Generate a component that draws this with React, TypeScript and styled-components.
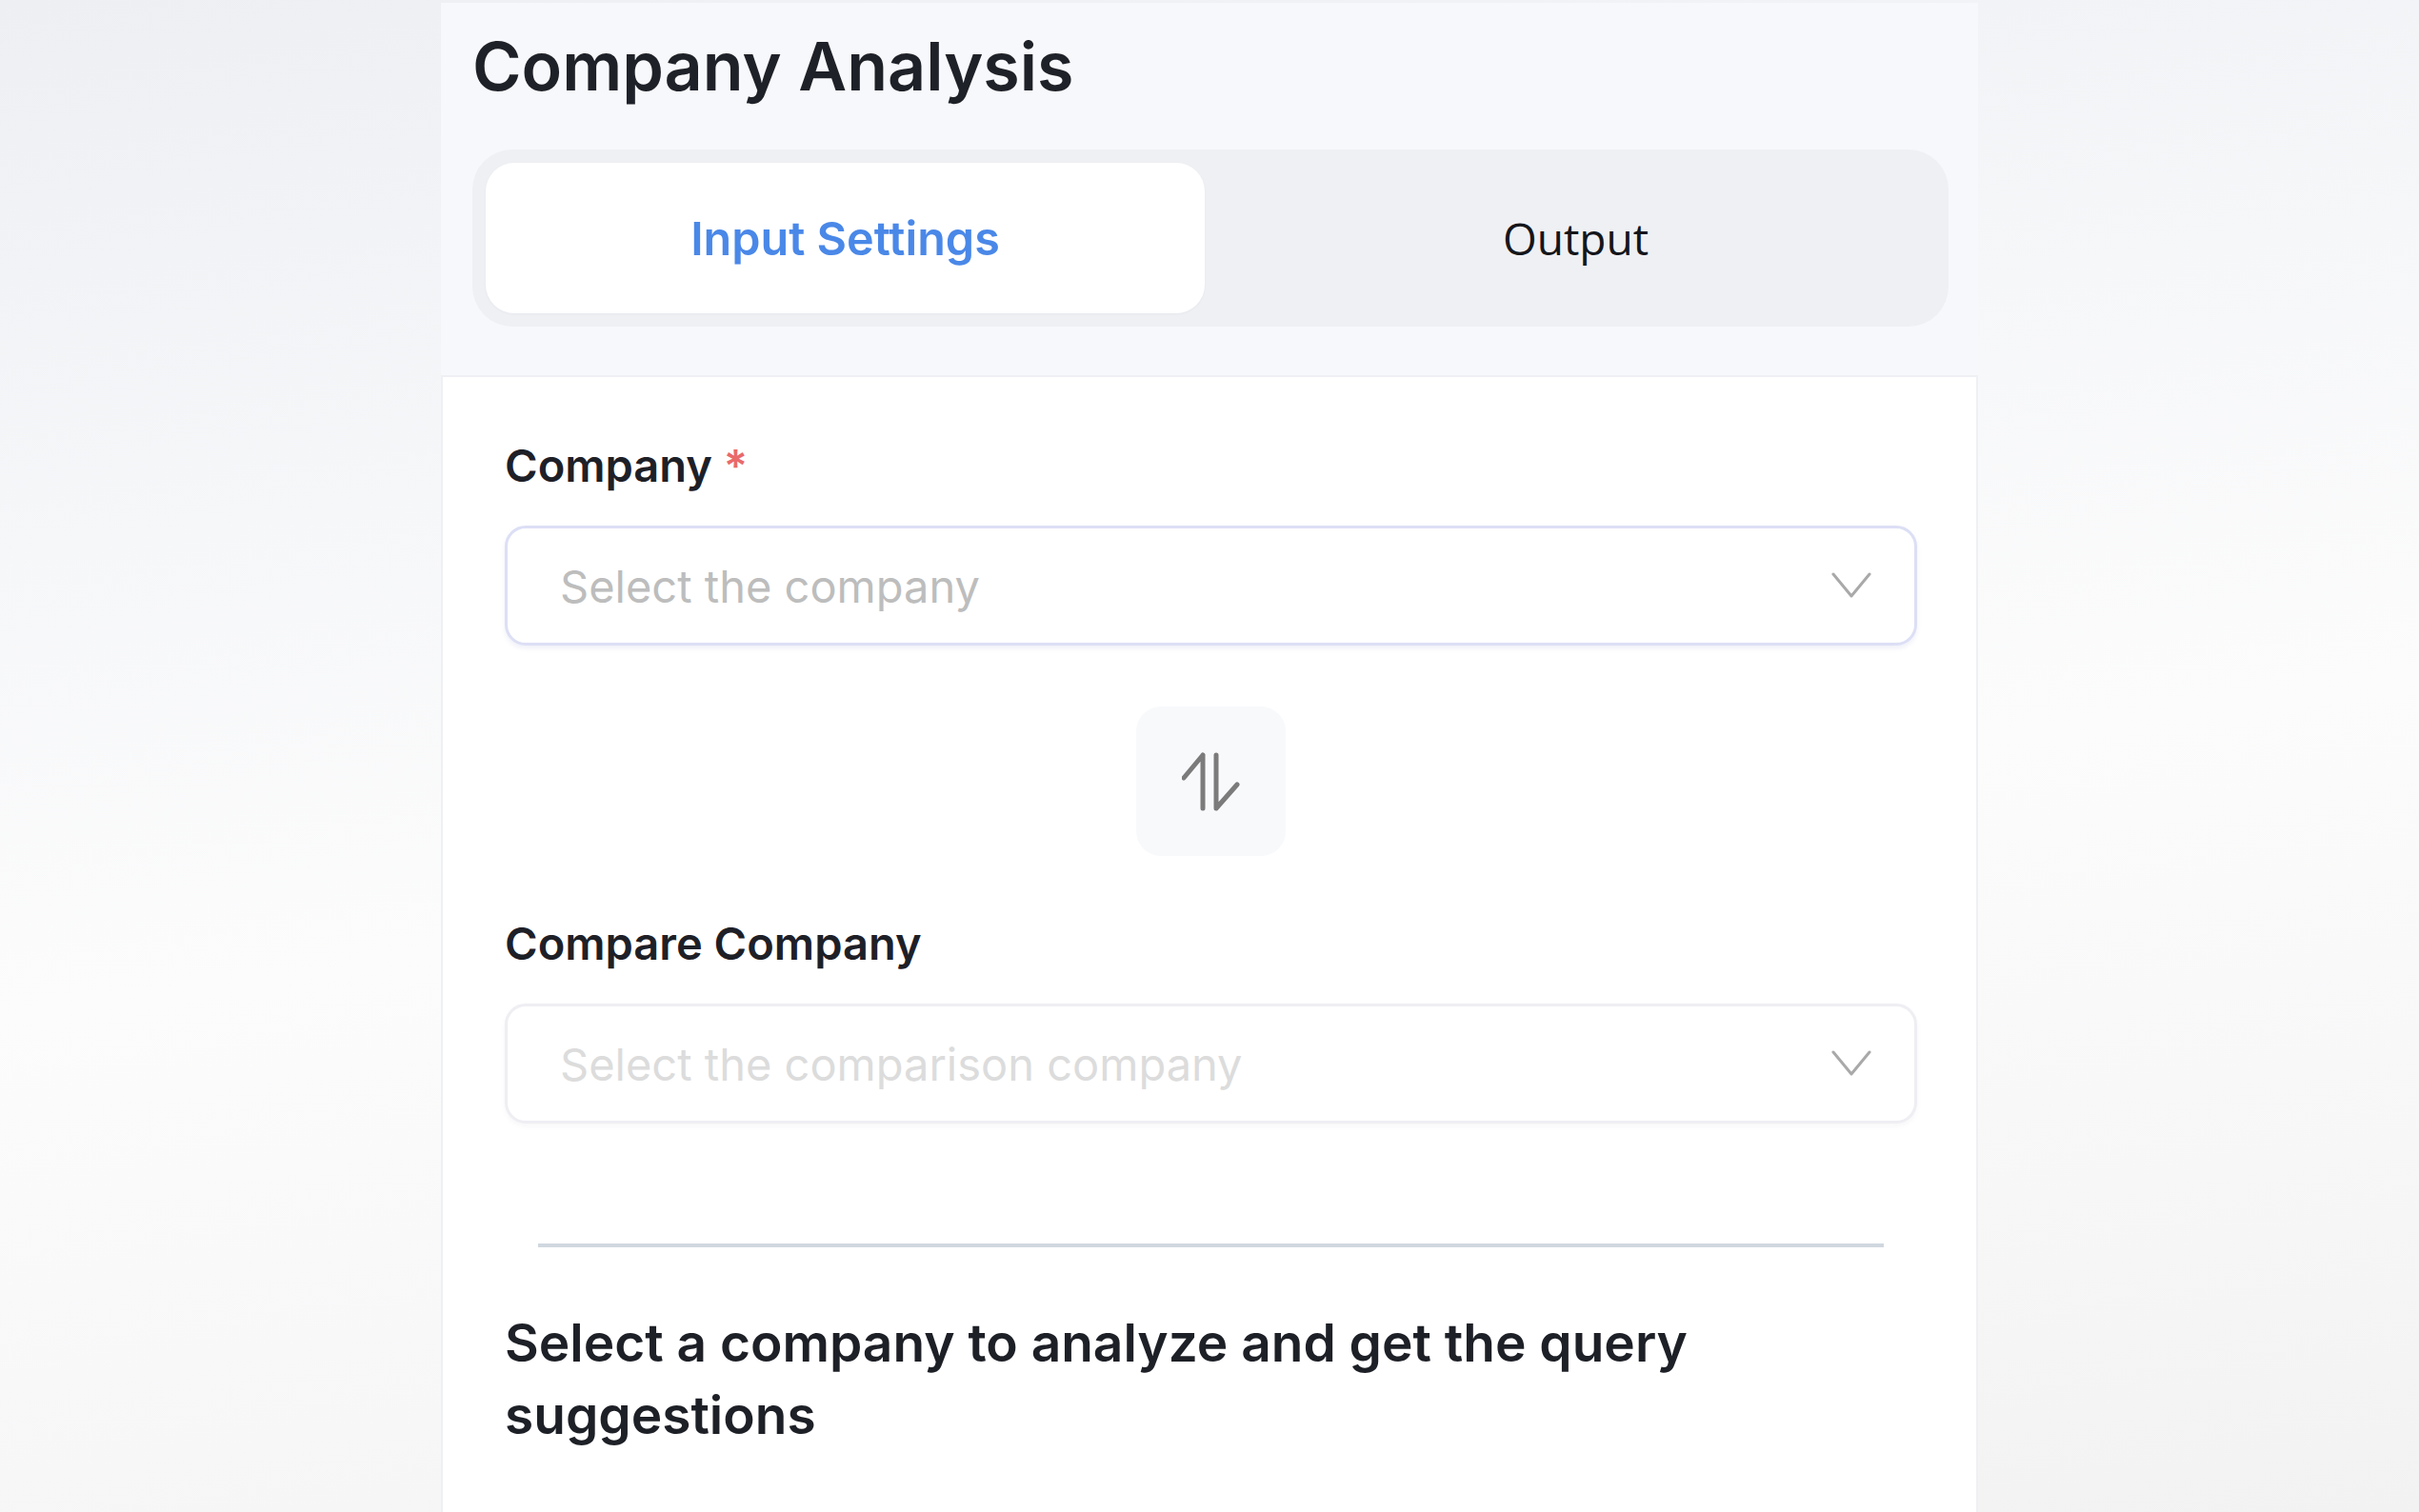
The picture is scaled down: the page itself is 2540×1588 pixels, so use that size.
import React from 'react';
import styled, { createGlobalStyle } from 'styled-components';

const GlobalStyle = createGlobalStyle`
    html, body {
        margin: 0;
        padding: 0;
    }

    body {
        font-family: Inter, 'Noto Sans', sans-serif;
        background: linear-gradient(172deg, #eeeff3 0%, #f6f7f9 30%, #fcfcfc 55%, #f7f7f8 80%, #f2f2f3 100%);
        min-height: 100vh;
        overflow: hidden;
    }
`;

const tabs = ['Input Settings', 'Output'];

export default function App() {
    const active = 0;

    return (
        <>
            <GlobalStyle />
            <Page>
                <Panel>
                    <Header>
                        <Title>Company Analysis</Title>
                        <TabBar>
                            {tabs.map((t, i) => (
                                <Tab key={t} active={i === active}>
                                    {t}
                                </Tab>
                            ))}
                        </TabBar>
                    </Header>
                    <Card>
                        <Field>
                            <Label>
                                Company <Required>*</Required>
                            </Label>
                            <Select placeholder="Select the company" focused />
                        </Field>
                        <SwapRow>
                            <SwapButton type="button">
                                <SwapIcon />
                            </SwapButton>
                        </SwapRow>
                        <Field>
                            <Label>Compare Company</Label>
                            <Select placeholder="Select the comparison company" />
                        </Field>
                        <Divider />
                        <Hint>Select a company to analyze and get the query suggestions</Hint>
                    </Card>
                </Panel>
            </Page>
        </>
    );
}

interface SelectProps {
    placeholder: string;
    focused?: boolean;
}

const Select = ({ placeholder, focused }: SelectProps) => {
    return (
        <SelectBox focused={!!focused}>
            <Placeholder focused={!!focused}>{placeholder}</Placeholder>
            <Chevron />
        </SelectBox>
    );
};

const Chevron = () => (
    <svg width="42" height="30" viewBox="0 0 42 30" fill="none">
        <path d="M2 3 L21 26 L40 3" stroke="#a9a9a9" strokeWidth="3" strokeLinecap="round" strokeLinejoin="round" />
    </svg>
);

// up harpoon with barb left, down harpoon with barb right
const SwapIcon = () => (
    <svg width="62" height="62" viewBox="0 0 62 62" fill="none">
        <path
            d="M22 3 L22 59 M22 3 L2 27 M36 3 L36 59 L58 34"
            stroke="#7b7b7b"
            strokeWidth="5"
            strokeLinecap="round"
            strokeLinejoin="round"
        />
    </svg>
);

const Page = styled.div`
    display: flex;
    justify-content: center;
    padding-top: 3px;
`;

const Panel = styled.div`
    width: 1614px;
    display: flex;
    flex-direction: column;
    min-height: 1585px;
`;

const Header = styled.div`
    background: #f7f8fb;
    padding: 24px 31px 51px 33px;
`;

const Title = styled.h1`
    margin: 0;
    font-size: 70px;
    line-height: 86px;
    font-weight: 600;
    color: #1f2129;
`;

const TabBar = styled.div`
    margin-top: 44px;
    height: 186px;
    box-sizing: border-box;
    padding: 14px;
    border-radius: 42px;
    background: #eff0f4;
    display: grid;
    grid-template-columns: 1fr 1fr;
    column-gap: 12px;
`;

const Tab = styled.div<{ active: boolean }>`
    display: flex;
    align-items: center;
    justify-content: center;
    border-radius: 30px;
    background: ${(props) => (props.active ? '#ffffff' : 'transparent')};
    color: ${(props) => (props.active ? '#4a88e8' : '#15161a')};
    font-family: ${(props) => (props.active ? 'Inter, sans-serif' : "'Open Sans', sans-serif")};
    font-weight: ${(props) => (props.active ? 600 : 400)};
    font-size: ${(props) => (props.active ? '48.5px' : '46px')};
    box-shadow: ${(props) => (props.active ? '0 1px 3px rgba(30, 40, 80, 0.04)' : 'none')};
`;

const Card = styled.div`
    flex: 1;
    background: #ffffff;
    border: 2px solid #eef0f4;
    border-bottom: none;
    padding: 64px 62px 0 65px;
    display: flex;
    flex-direction: column;
`;

const Field = styled.div`
    display: flex;
    flex-direction: column;
    gap: 35px;
`;

const Label = styled.div`
    font-size: 47px;
    line-height: 57px;
    font-weight: 600;
    color: #1e2027;
`;

const Required = styled.span`
    color: #e96a6a;
`;

const SelectBox = styled.div<{ focused: boolean }>`
    height: 126px;
    box-sizing: border-box;
    border-radius: 22px;
    border: 3px solid ${(props) => (props.focused ? '#dcdff5' : '#eeeef3')};
    box-shadow: ${(props) => (props.focused ? '0 3px 5px rgba(120, 130, 200, 0.12)' : '0 3px 5px rgba(120, 120, 150, 0.06)')};
    display: flex;
    align-items: center;
    justify-content: space-between;
    padding: 0 45px 0 55px;
    background: #ffffff;
`;

const Placeholder = styled.span<{ focused: boolean }>`
    font-size: 47px;
    font-weight: 400;
    color: ${(props) => (props.focused ? '#bdbdbd' : '#dcdcdc')};
`;

const SwapRow = styled.div`
    display: flex;
    justify-content: center;
    margin: 64px 0 63px;
`;

const SwapButton = styled.button`
    width: 157px;
    height: 157px;
    border: none;
    border-radius: 26px;
    background: #f8f9fb;
    display: flex;
    align-items: center;
    justify-content: center;
    padding: 0;
`;

const Divider = styled.div`
    height: 4px;
    background: #d0d7df;
    margin: 126px 35px 0;
`;

const Hint = styled.p`
    margin: 62px 0 0;
    font-size: 55px;
    line-height: 76px;
    font-weight: 600;
    color: #1e2027;
    max-width: 1300px;
`;
